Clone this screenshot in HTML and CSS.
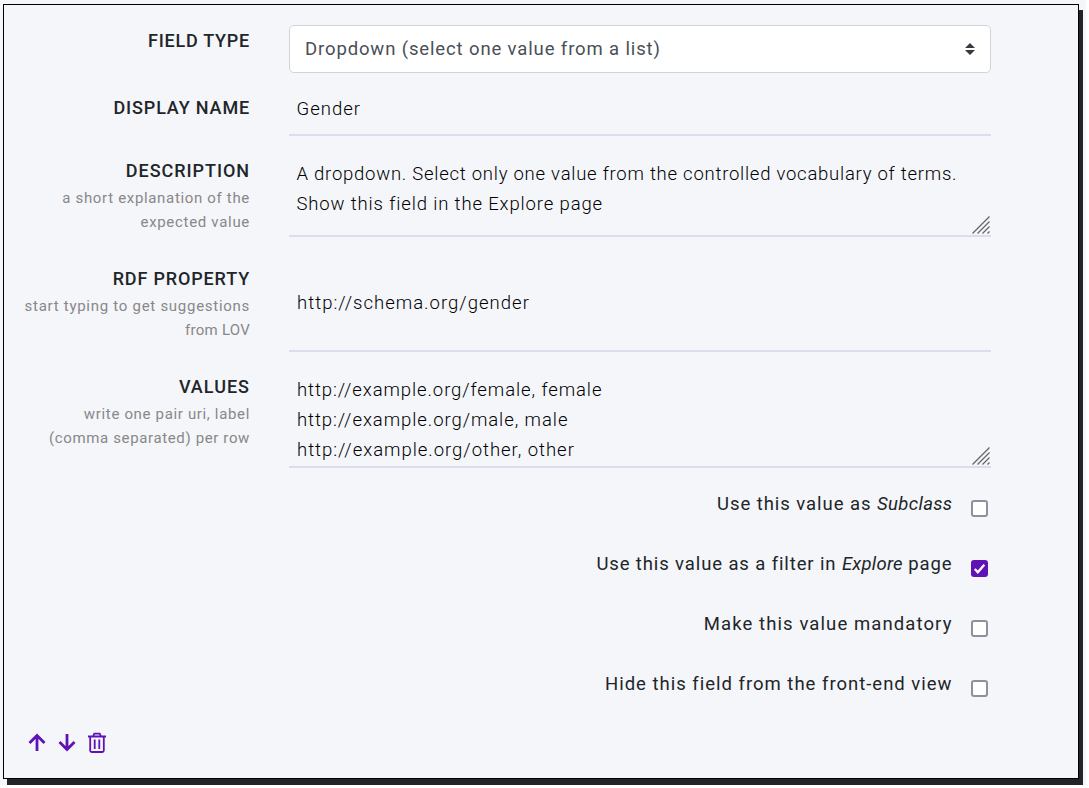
FILE: index.html
```html
<!DOCTYPE html>
<html lang="en">
<head>
<meta charset="utf-8">
<title>Field settings</title>
<link rel="stylesheet" href="styles.css">
</head>
<body>
<section class="card">
  <div class="row row-type">
    <div class="label"><span class="l-type">FIELD TYPE</span></div>
    <div class="select">
      <span class="t-select">Dropdown (select one value from a list)</span>
      <svg width="10" height="12" viewBox="0 0 10 12"><path d="M0 5h10L5 0zM0 7h10L5 12z" fill="#343a40"/></svg>
    </div>
  </div>
  <div class="row row-name">
    <div class="label"><span class="l-name">DISPLAY NAME</span></div>
    <div class="input"><span class="t-name">Gender</span></div>
  </div>
  <div class="row row-desc">
    <div class="label"><span class="l-desc">DESCRIPTION</span>
      <small class="s-desc1">a short explanation of the</small><small class="s-desc2">expected value</small></div>
    <div class="input"><span class="t-desc1">A dropdown. Select only one value from the controlled vocabulary of terms.</span><span class="t-desc2">Show this field in the Explore page</span>
      <svg class="grip" width="18" height="18" viewBox="0 0 18 18"><path d="M.5 17.5l17-17M5.5 17.5l12-12M10.500 17.500l7-7M15.500 17.500l2-2"/></svg></div>
  </div>
  <div class="row row-rdf">
    <div class="label"><span class="l-rdf">RDF PROPERTY</span>
      <small class="s-rdf1">start typing to get suggestions</small><small class="s-rdf2">from LOV</small></div>
    <div class="input"><span class="t-rdf">http://schema.org/gender</span></div>
  </div>
  <div class="row row-values">
    <div class="label"><span class="l-values">VALUES</span>
      <small class="s-val1">write one pair uri, label</small><small class="s-val2">(comma separated) per row</small></div>
    <div class="input"><span class="t-val1">http://example.org/female, female</span><span class="t-val2">http://example.org/male, male</span><span class="t-val3">http://example.org/other, other</span>
      <svg class="grip" width="18" height="18" viewBox="0 0 18 18"><path d="M.5 17.5l17-17M5.5 17.5l12-12M10.500 17.500l7-7M15.500 17.500l2-2"/></svg></div>
  </div>
  <div class="checks">
    <div class="check"><span class="c-sub">Use this value as <i>Subclass</i></span><b class="box"></b></div>
    <div class="check"><span class="c-filter">Use this value as a filter in <i>Explore</i> page</span><b class="box on"><svg width="17" height="17" viewBox="0 0 17 17"><path d="M3.800 9l3 3.200L13.300 4.700" fill="none" stroke="#fff" stroke-width="2.300"/></svg></b></div>
    <div class="check"><span class="c-mand">Make this value mandatory</span><b class="box"></b></div>
    <div class="check"><span class="c-hide">Hide this field from the front-end view</span><b class="box"></b></div>
  </div>
  <div class="actions">
    <svg width="18" height="22" viewBox="0 0 18 22"><path d="M9 19V4M1.500 11L9 3.500l7.500 7.500" stroke-width="2.800"/></svg>
    <svg width="18" height="22" viewBox="0 0 18 22"><path d="M9 2v15M1.500 10L9 17.500l7.500-7.500" stroke-width="2.800"/></svg>
    <svg width="18" height="22" viewBox="0 0 18 22"><path d="M0 4.500h18M5 4.500l1.300-2.900h5.400L13 4.500M2.200 4.500v14q0 1.500 1.500 1.500h10.600q1.500 0 1.500-1.500v-14M6.700 7.500v9.500M11.300 7.500v9.500" stroke-width="1.800"/></svg>
  </div>
</section>
</body>
</html>
```
FILE: styles.css
```css
* { box-sizing: border-box; }
html { background: #fff; }
body { margin: 0; width: 1086px; height: 785px; overflow: hidden; display: flow-root; background: #f4f6fa; color: #212529; font: 18.5px/30px Roboto, "Liberation Sans", sans-serif; }
.card { width: 1076px; height: 775px; margin: 4px 0 0 3px; padding: 20px 0 0 20px; border: 1px solid #000; background: #f4f6fa; box-shadow: 4px 6px 0 #212529; }
.row { display: grid; grid-template-columns: 226px 702px; column-gap: 39px; align-items: start; }
.row-type { height: 67px; }
.row-name { height: 64px; }
.row-desc, .row-rdf { height: 108px; }
.row-values { height: 117px; }
.label { display: flex; flex-direction: column; align-items: flex-end; font-size: 18px; font-weight: 500; white-space: nowrap; }
.label small { font-size: 15px; font-weight: 400; line-height: 24px; color: #888; }
.row-type .label, .row-name .label { padding-top: 1px; }
.select { height: 48px; display: flex; align-items: center; justify-content: space-between; padding: 0 15px; border: 1px solid #ced4da; border-radius: 5px; background: #fff; color: #495057; }
.input { position: relative; display: flex; flex-direction: column; align-items: flex-start; padding-left: 7.5px; border-bottom: 2px solid #e0daf0; color: #000; font-weight: 300; white-space: nowrap; }
.row-name .input { height: 44px; padding-top: 2px; }
.row-desc .input { height: 81px; padding-top: 3px; }
.row-rdf .input { height: 88px; padding-top: 24px; }
.row-values .input { height: 96px; padding-top: 3px; }
.row-rdf .input, .row-values .input { padding-left: 8px; }
.grip { position: absolute; right: 1px; bottom: 1px; fill: none; stroke: #666; stroke-width: 1.300; }
.checks { width: 964px; }
.check { height: 60px; display: flex; justify-content: flex-end; align-items: flex-start; gap: 18.5px; white-space: nowrap; }
.box { width: 17px; height: 17px; margin-top: 10.5px; border: 2px solid #8f8f9d; border-radius: 3px; background: #fff; }
.box.on { border: 0; background: #6012b4; }
.box svg { display: block; }
.actions { display: flex; gap: 12px; padding: 3px 0 0 4px; }
.actions svg { fill: none; stroke: #6012b4; }

/* tracking per line of text */
.l-type { letter-spacing: .75px; }
.l-name, .l-rdf { letter-spacing: .85px; }
.l-desc { letter-spacing: .95px; }
.l-values { letter-spacing: 1px; }
.s-desc1 { letter-spacing: .67px; }
.s-desc2 { letter-spacing: .69px; }
.s-rdf1 { letter-spacing: .72px; }
.s-rdf2 { letter-spacing: .25px; }
.s-val1 { letter-spacing: .66px; }
.s-val2 { letter-spacing: .63px; }
.t-select { letter-spacing: .87px; }
.t-name { letter-spacing: 1px; }
.t-desc1 { letter-spacing: .75px; }
.t-desc2 { letter-spacing: .86px; }
.t-rdf { letter-spacing: 1.02px; }
.t-val1 { letter-spacing: .91px; }
.t-val2 { letter-spacing: .93px; }
.t-val3 { letter-spacing: .97px; }
.c-sub { letter-spacing: .94px; }
.c-sub i { letter-spacing: .36px; }
.c-filter { letter-spacing: .88px; }
.c-filter i { letter-spacing: .25px; }
.c-mand { letter-spacing: 1.1px; }
.c-hide { letter-spacing: .99px; }
```
